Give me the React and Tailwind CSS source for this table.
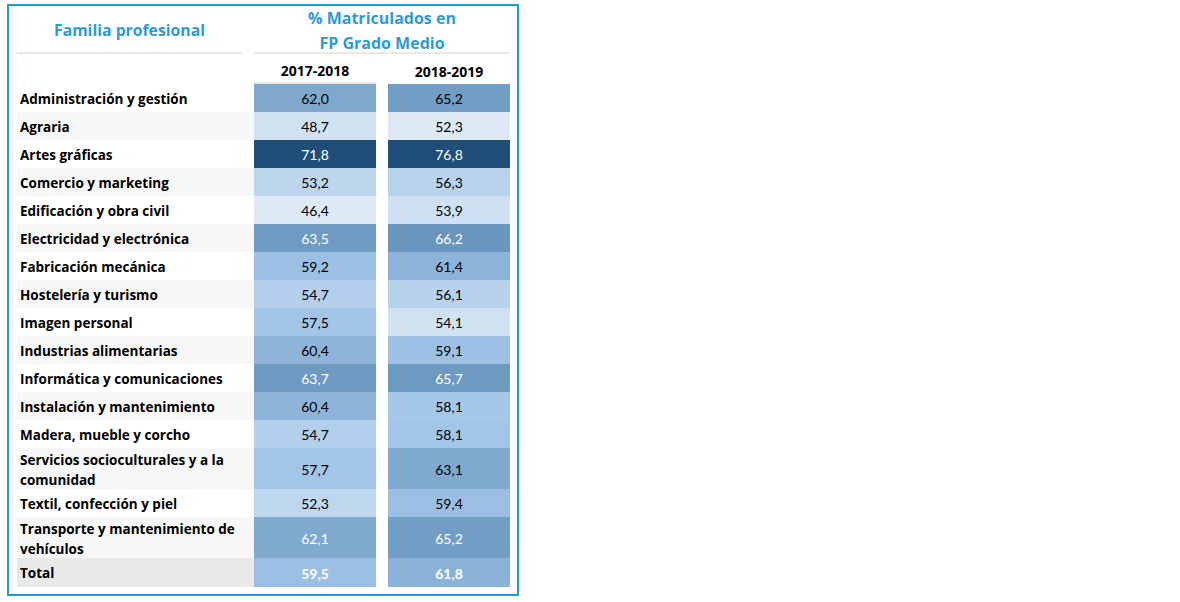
import React from "react";

const rows = [
  { name: "Administración y gestión", a: ["62,0", "#7fa8cc", false], b: ["65,2", "#729dc4", false] },
  { name: "Agraria", a: ["48,7", "#d0e1f2", false], b: ["52,3", "#dce9f5", false] },
  { name: "Artes gráficas", a: ["71,8", "#1f4e79", true], b: ["76,8", "#1f4e79", true] },
  { name: "Comercio y marketing", a: ["53,2", "#bdd5ed", false], b: ["56,3", "#bad3ec", false] },
  { name: "Edificación y obra civil", a: ["46,4", "#ddeaf6", false], b: ["53,9", "#cfe0f2", false] },
  { name: "Electricidad y electrónica", a: ["63,5", "#6f9ac1", true], b: ["66,2", "#6a95bf", true] },
  { name: "Fabricación mecánica", a: ["59,2", "#9cc0e4", false], b: ["61,4", "#8eb3d8", false] },
  { name: "Hostelería y turismo", a: ["54,7", "#b3cfec", false], b: ["56,1", "#b8d2ed", false] },
  { name: "Imagen personal", a: ["57,5", "#a2c4e6", false], b: ["54,1", "#d0e1f2", false] },
  { name: "Industrias alimentarias", a: ["60,4", "#8fb4da", false], b: ["59,1", "#9dc1e4", false] },
  { name: "Informática y comunicaciones", a: ["63,7", "#6e99c0", true], b: ["65,7", "#6e99c0", true] },
  { name: "Instalación y mantenimiento", a: ["60,4", "#8fb4d9", false], b: ["58,1", "#a5c7e8", false] },
  { name: "Madera, mueble y corcho", a: ["54,7", "#b2cfec", false], b: ["58,1", "#a3c5e7", false] },
  { name: "Servicios socioculturales y a la comunidad", a: ["57,7", "#a3c5e7", false], b: ["63,1", "#80a9cf", false], tall: true },
  { name: "Textil, confección y piel", a: ["52,3", "#bed6ee", false], b: ["59,4", "#9bbfe3", false] },
  { name: "Transporte y mantenimiento de vehículos", a: ["62,1", "#80a9cf", true], b: ["65,2", "#729dc4", true], tall: true },
];

const Cell = ({ value, bg, light, bold }) => (
  <div
    className={`w-[122px] flex items-center justify-center pt-[1px] font-['Lato'] ${light ? "text-white" : "text-black"} ${bold ? "font-bold" : ""}`}
    style={{ backgroundColor: bg }}
  >
    {value}
  </div>
);

const App = () => {
  return (
    <div className="w-[1180px] h-[602px] bg-white pt-[4px] pl-[7px]" style={{ fontFamily: "'Open Sans', Lato, sans-serif" }}>
      <div className="w-[512px] h-[592px] border-2 border-[#1e98d5] pl-[8px] pr-[7px] text-[14px]">
        {/* cabecera */}
        <div className="flex h-[48px]">
          <div className="w-[225px] border-b-2 border-[#e8e8e8] flex items-center justify-center text-[15.75px] font-bold text-[#2b9ad6] pt-[3px]">
            Familia profesional
          </div>
          <div className="w-[12px]" />
          <div className="w-[256px] border-b-2 border-[#e8e8e8] flex flex-col items-center justify-center text-[16px] leading-[25px] font-bold text-[#2b9ad6] pt-[3px]">
            <span>% Matriculados en</span>
            <span>FP Grado Medio</span>
          </div>
        </div>

        <div className="flex h-[30px] font-bold text-black text-[14px]">
          <div className="w-[237px]" />
          <div className="w-[122px] flex items-center justify-center border-b-2 border-[#e8e8e8] pt-[5px]">2017-2018</div>
          <div className="w-[12px]" />
          <div className="w-[122px] flex items-center justify-center pt-[5px]">2018-2019</div>
        </div>

        {rows.map((r, i) => (
          <div key={i} className={`flex ${r.tall ? "h-[41px]" : "h-[28px]"}`}>
            <div
              className={`w-[237px] pl-[3px] pr-[2px] pt-[2px] flex items-center font-bold text-black text-[13.5px] leading-[20px] ${i % 2 === 1 ? "bg-[#f7f7f7]" : "bg-white"}`}
            >
              {r.name}
            </div>
            <Cell value={r.a[0]} bg={r.a[1]} light={r.a[2]} />
            <div className="w-[12px] bg-white" />
            <Cell value={r.b[0]} bg={r.b[1]} light={r.b[2]} />
          </div>
        ))}

        <div className="flex h-[29px]">
          <div className="w-[237px] pl-[3px] pt-[2px] flex items-center font-bold text-black text-[13.5px] bg-[#e9e9e9]">Total</div>
          <Cell value="59,5" bg="#9bbfe3" light bold />
          <div className="w-[12px] bg-white" />
          <Cell value="61,8" bg="#8cb2d8" light bold />
        </div>
      </div>
    </div>
  );
};

export default App;
